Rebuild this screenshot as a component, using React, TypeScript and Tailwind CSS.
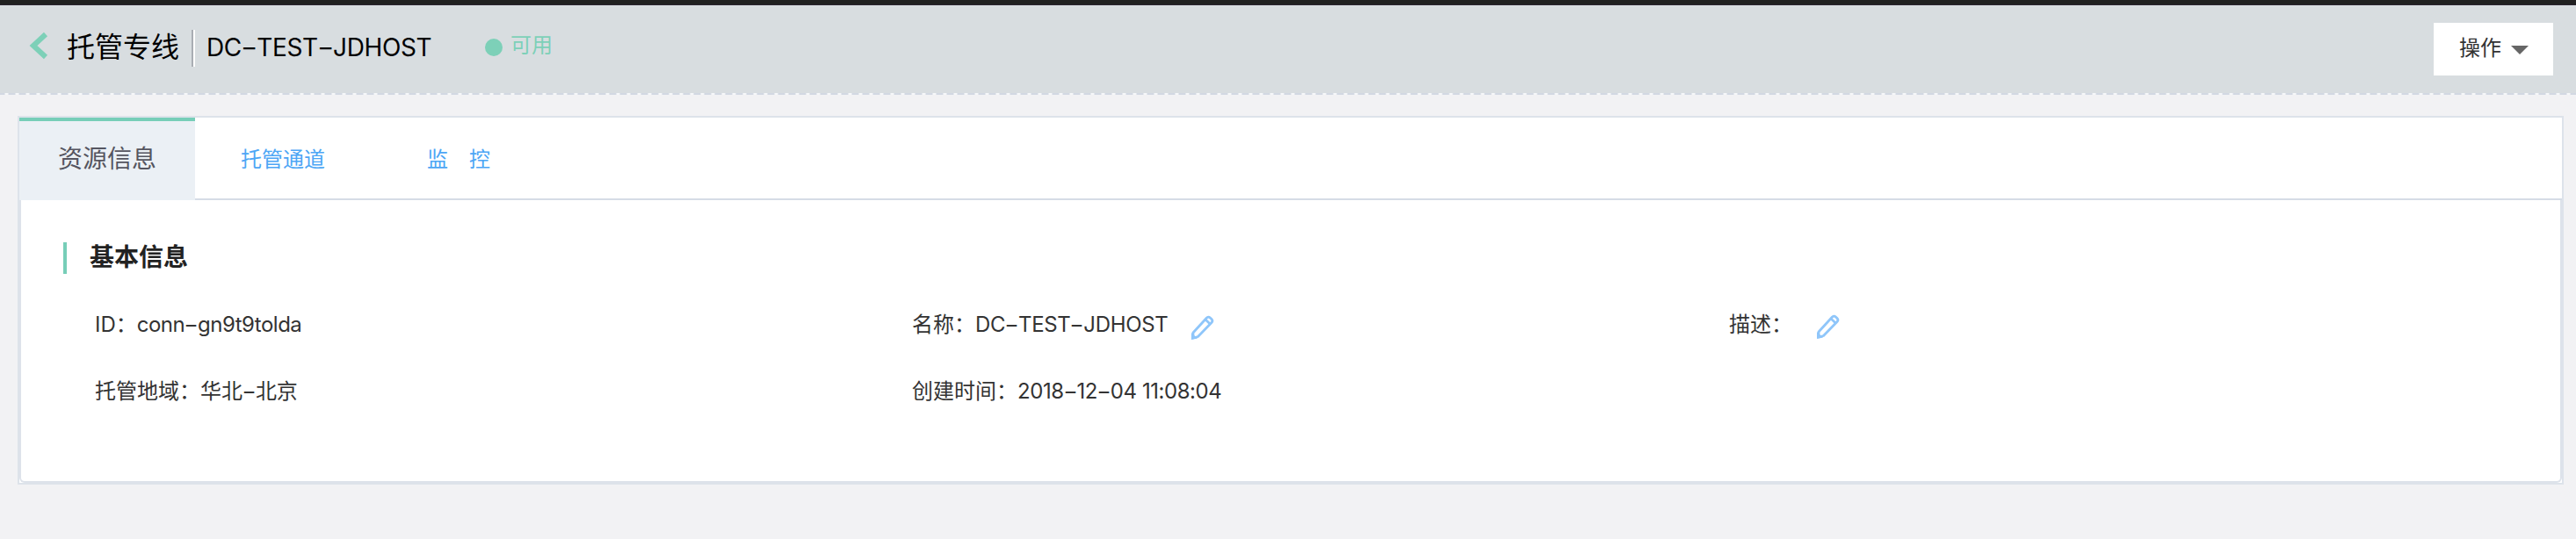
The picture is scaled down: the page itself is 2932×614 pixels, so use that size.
import React from "react";

const latin = "font-['Inter','Noto_Sans_CJK_SC',sans-serif]";

/* Text whose hyphens are drawn wide. */
function Wide({ text }: { text: string }) {
  return (
    <>
      {text.split("-").map((part, i) => (
        <React.Fragment key={i}>
          {i > 0 && <span className="inline-block w-[0.62em] scale-x-150 text-center tracking-normal">-</span>}
          {part}
        </React.Fragment>
      ))}
    </>
  );
}

function Pencil({ className }: { className: string }) {
  return (
    <svg className={className} width="28" height="28" viewBox="0 0 28 28" fill="none" stroke="#8fc6fa" strokeWidth="2.8" strokeLinejoin="round">
      <path d="M3 20 L18.3 3.2 Q20.3 1 22.4 3 L24 4.5 Q26 6.500 24 8.500 L8.500 24.500 L3 26 Z" />
      <path d="M17 5 L22.300 10" />
      <path d="M1 28 V20 L8 26.500 Z" fill="#8fc6fa" stroke="none" />
    </svg>
  );
}

function Field({ label, value = "", spacing = "", children }: { label: string; value?: string; spacing?: string; children?: React.ReactNode }) {
  return (
    <div className="flex h-9 w-[930px] items-center whitespace-nowrap text-[24px] leading-9 text-[#333]">
      <span>{label}：</span>
      <span className={spacing}><Wide text={value} /></span>
      {children}
    </div>
  );
}

export default function App() {
  return (
    <div className={"flex h-[614px] w-[2932px] flex-col overflow-hidden bg-[#f2f2f4] text-[#333] " + latin}>
      <div className="h-[6px] shrink-0 border-b border-[#2b2430] bg-[#212121]" />
      <header className="flex h-[100px] shrink-0 items-start bg-[#d8dde0]">
        <svg className="ml-[32px] mt-[30px]" width="24" height="32" viewBox="0 0 24 32" fill="none" stroke="#7dd0b8" strokeWidth="6">
          <path d="M20 3 L6 16 L20 29" />
        </svg>
        <h1 className="ml-[20px] mt-[24px] w-[142px] text-[32px] leading-[48px] text-black">托管专线</h1>
        <div className="mt-[28px] h-[42px] w-[4px] border-r-2 border-white bg-[#a9adb3]" />
        <div className="ml-[13px] mt-[24px] w-[317px] whitespace-nowrap text-[28px] leading-[48px] tracking-[-0.38px] text-black">
          <Wide text="DC-TEST-JDHOST" />
        </div>
        <div className="mt-[38px] h-5 w-5 rounded-full bg-[#7dd0b8]" />
        <div className="ml-[9px] mt-[28px] text-[24px] leading-9 text-[#7dd0b8]">可用</div>
        <button className="ml-auto mr-[26px] mt-[20px] flex h-[60px] w-[136px] items-center bg-white pl-[29px] text-[24px] text-[#333]">
          <span className="-mt-[2px]">操作</span>
          <svg className="ml-[11px] mt-[2px]" width="20" height="10" viewBox="0 0 20 10">
            <path d="M0 0 H20 L10 10 Z" fill="#666" />
          </svg>
        </button>
      </header>
      <div className="h-[2px] w-full shrink-0 bg-[repeating-linear-gradient(90deg,#d2d8e2_0px,#d2d8e2_5px,#f5f7f9_6px,#f5f7f9_9px,#d2d8e2_10px,#d2d8e2_12px)]" />
      <main className="ml-5 mt-6 flex h-[420px] w-[2898px] shrink-0 flex-col border-2 border-[#dde3ea] bg-white">
        <nav className="flex h-[94px] shrink-0">
          <div className="flex w-[200px] items-center justify-center border-t-4 border-[#77ceb8] bg-[#ebf0f5] text-[28px] text-[#555560]">
            <span className="-mt-[4px]">资源信息</span>
          </div>
          <div className="flex flex-1 items-center border-b-2 border-[#d5dce6] pt-[3px] text-[24px] text-[#4da6f5]">
            <span className="ml-[52px] w-[212px]">托管通道</span>
            <span className="flex gap-6"><span>监</span><span>控</span></span>
          </div>
        </nav>
        <section className="h-[322px] rounded-b-[6px] border-x-2 border-b-2 border-[#dde2ea] pl-[48px] pt-12">
          <div className="flex h-9 items-center border-l-4 border-[#77ceb8] pl-[26px]">
            <h2 className="-mt-[3px] text-[28px] font-bold leading-9 text-[#222]">基本信息</h2>
          </div>
          <div className="flex flex-wrap gap-y-10 pl-[36px] pt-[40px]">
            <Field label="ID" value="conn-gn9t9tolda" spacing="tracking-[-0.5px]" />
            <Field label="名称" value="DC-TEST-JDHOST" spacing="tracking-[-0.35px]">
              <Pencil className="ml-[26px] mt-[6px]" />
            </Field>
            <Field label="描述">
              <Pencil className="ml-[27px] mt-[4px]" />
            </Field>
            <Field label="托管地域" value="华北-北京" />
            <Field label="创建时间" value="2018-12-04 11:08:04" spacing="tracking-[-0.45px]" />
          </div>
        </section>
      </main>
    </div>
  );
}
